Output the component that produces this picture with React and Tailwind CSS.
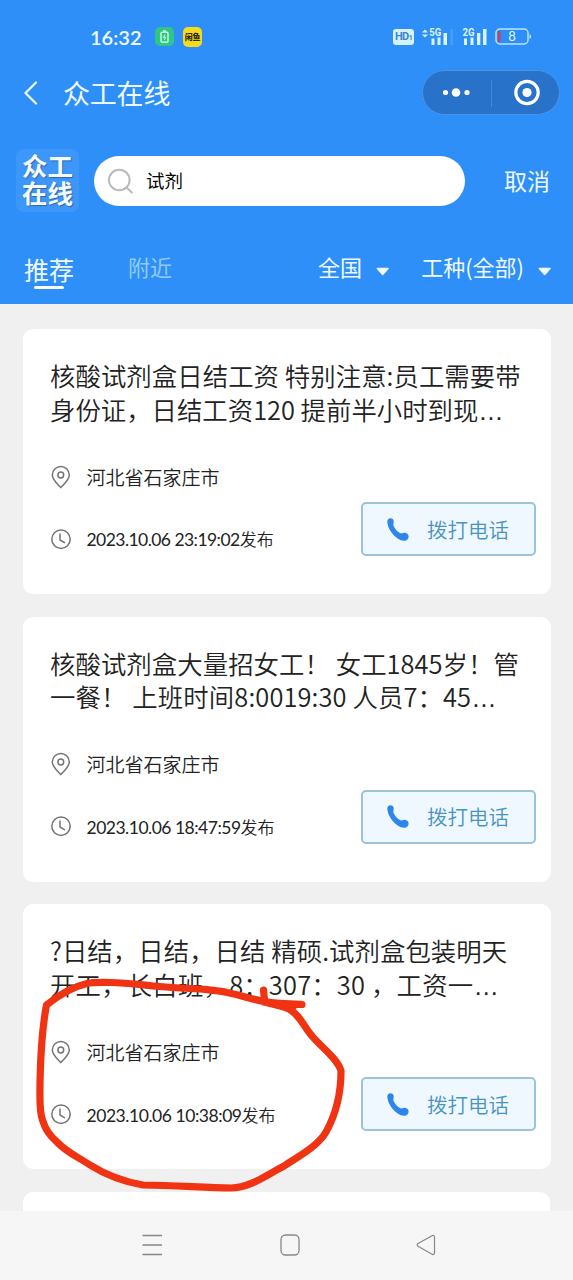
import React from 'react';

const jobs = [
    {
        id: 1,
        lines: [
            { text: '核酸试剂盒日结工资 特别注意:员工需要带', style: 'tracking-[0.06px]' },
            { text: '身份证，日结工资120 提前半小时到现', style: 'tracking-[0px]' },
        ],
        city: '河北省石家庄市',
        date: '2023.10.06 23:19:02',
        dateStyle: 'tracking-[-0.55px]',
    },
    {
        id: 2,
        lines: [
            { text: '核酸试剂盒大量招女工！ 女工1845岁！管', style: 'tracking-[0.06px]' },
            { text: '一餐！ 上班时间8:0019:30 人员7：45', style: 'tracking-[0.12px]' },
        ],
        city: '河北省石家庄市',
        date: '2023.10.06 18:47:59',
        dateStyle: 'tracking-[-0.5px]',
    },
    {
        id: 3,
        lines: [
            { text: '?日结，日结，日结 精硕.试剂盒包装明天', style: 'tracking-[0.06px]' },
            { text: '开工，长白班，8：307：30 ，工资一', style: 'tracking-[0.2px]' },
        ],
        city: '河北省石家庄市',
        date: '2023.10.06 10:38:09',
        dateStyle: 'tracking-[-0.45px]',
    },
];

const App = () => (
    <div className="relative flex h-[1280px] w-[573px] flex-col overflow-hidden bg-[#f0f0f0] font-['Noto_Sans_CJK_SC',sans-serif] font-[350] text-[#222]">
        <header className="h-[304px] shrink-0 bg-[#2f8ff9] text-[#eefaff]">
            <StatusBar />
            <NavBar />
            <SearchRow />
            <FilterRow />
        </header>

        <main className="flex min-h-0 flex-1 flex-col gap-[22.7px] overflow-hidden px-[23px] pt-[25px]">
            {jobs.map((job) => (
                <JobCard key={job.id} job={job} />
            ))}
            <div className="h-[265px] shrink-0 rounded-[10px] bg-white" />
        </main>

        <SystemNav />
        <Scribble />
    </div>
);

const StatusBar = () => (
    <div className="flex h-[69px] items-center pt-1 pr-[41px] pl-[90px]">
        <span className="w-[65px] font-['Lato','Noto_Sans_CJK_SC',sans-serif] text-[20px] leading-none font-semibold whitespace-nowrap">16:32</span>
        <div className="flex h-[19px] w-[19px] items-center justify-center rounded-[5px] bg-[#2fc783]">
            <svg width="9" height="13" viewBox="0 0 9 13" fill="none" stroke="#eafff4" strokeWidth="1.2">
                <rect x="1" y="2.2" width="7" height="10" rx="1" />
                <path d="M3 1h3" />
                <path d="M4.8 4.8 3.4 7.4h2.2L4.4 10" strokeWidth="0.9" />
            </svg>
        </div>
        <div className="ml-[9px] flex h-[20px] w-[19px] items-center justify-center rounded-[5px] bg-[#fadb1c]">
            <span className="text-[8px] leading-none font-black tracking-[-0.3px] text-[#2d2a12]">闲鱼</span>
        </div>
        <div className="ml-auto flex items-center">
            <div className="flex h-[16px] w-[21px] items-center justify-center rounded-[3px] bg-[#d6f2ff] font-['Roboto',sans-serif] text-[11px] leading-none font-bold tracking-[-0.6px] text-[#3b86c9]">
                HD<span className="pt-1 text-[7px]">1</span>
            </div>
            <svg className="ml-[8px]" width="33" height="19" viewBox="0 0 33 19" fill="#d9f4ff">
                <path d="M0 5.5 3 2.5l3 3zM0 7.5h6l-3 3z" />
                <text x="7.3" y="9" fontSize="11" fontWeight="700" fontFamily="Roboto" textLength="12" lengthAdjust="spacingAndGlyphs">5G</text>
                <rect x="9.5" y="11.5" width="3" height="6.5" />
                <rect x="15.5" y="10.5" width="3" height="7.5" />
                <rect x="21.5" y="6" width="3.5" height="12" />
                <rect x="28.5" y="2" width="2.5" height="16" opacity="0.15" />
            </svg>
            <svg className="ml-[7px]" width="26" height="19" viewBox="0 0 26 19" fill="#d9f4ff">
                <text x="0.5" y="9" fontSize="11" fontWeight="700" fontFamily="Roboto" textLength="12" lengthAdjust="spacingAndGlyphs">2G</text>
                <rect x="2" y="11.5" width="3" height="6.5" />
                <rect x="8.5" y="10.5" width="3" height="7.5" />
                <rect x="15" y="6" width="3.3" height="12" />
                <rect x="21" y="2" width="3.5" height="16" />
            </svg>
            <svg className="ml-[7px]" width="37" height="17" viewBox="0 0 37 17" fill="none">
                <rect x="1" y="1" width="32" height="15" rx="4" stroke="#b9e4ff" strokeWidth="1.5" />
                <path d="M5.5 3v11H4.5q-1.5 0-1.5-2V5q0-2 1.5-2z" fill="#d8366b" />
                <path d="M34.5 6v5q1.7-.5 1.7-2.5T34.5 6z" fill="#b9e4ff" />
                <text x="17" y="13" fontSize="13" fontFamily="Lato" fontWeight="400" textAnchor="middle" fill="#e4f7ff">8</text>
            </svg>
        </div>
    </div>
);

const NavBar = () => (
    <div className="flex h-[47px] items-center pr-[13px] pl-[23px]">
        <svg width="16" height="24" viewBox="0 0 16 24" fill="none" stroke="currentColor" strokeWidth="2.2" strokeLinecap="round" strokeLinejoin="round">
            <path d="M13 1.5 2.5 12 13 22.5" />
        </svg>
        <h1 className="ml-[24px] text-[27px] leading-none font-normal tracking-[-0.2px]">众工在线</h1>
        <div className="ml-auto flex h-[45px] w-[138px] items-center rounded-full border border-[#4b93e4] bg-[#2872c9]">
            <svg width="136" height="43" viewBox="0 0 136 43" fill="white">
                <circle cx="22.5" cy="21.5" r="2.6" />
                <circle cx="33" cy="21.5" r="4.3" />
                <circle cx="44" cy="21.5" r="2.6" />
                <path d="M68.5 9v27" stroke="#4686d3" />
                <circle cx="104" cy="21.5" r="11.2" fill="none" stroke="white" strokeWidth="3.2" />
                <circle cx="104" cy="21.5" r="4.6" />
            </svg>
        </div>
    </div>
);

const SearchRow = () => (
    <div className="mt-[33px] flex h-[63px] items-center pr-[23px] pl-[16px]">
        <div className="flex h-[63px] w-[63px] items-center justify-center rounded-lg bg-[#3d97fa]">
            <p className="font-['Liberation_Sans','Noto_Sans_CJK_SC',sans-serif] text-[25.5px] leading-[26.5px] font-bold text-[#f4fbff] [text-shadow:1px_1px_1px_#35659e]">众工<br />在线</p>
        </div>
        <div className="ml-[15px] flex h-[50px] w-[371px] items-center rounded-full bg-white pl-[14px]">
            <svg width="25" height="26" viewBox="0 0 25 26" fill="none" stroke="#b9bbb8" strokeWidth="2">
                <circle cx="11.3" cy="12" r="10.3" />
                <path d="m18.5 19.5 5.3 5" strokeLinecap="round" />
            </svg>
            <span className="ml-[13px] text-[18.5px] leading-none font-normal text-black">试剂</span>
        </div>
        <button className="ml-auto text-[23px] leading-none font-normal">取消</button>
    </div>
);

const FilterRow = () => (
    <div className="flex h-[91px] items-start pt-[43px] pr-[21px] pl-[24px] leading-none font-normal">
        <div className="flex flex-col items-center">
            <span className="text-[25px] leading-[28px]">推荐</span>
            <span className="mt-[3px] h-[3px] w-[30px] rounded-full bg-white" />
        </div>
        <span className="ml-[54px] text-[22px] leading-[23px] text-[#8fcbfc]">附近</span>
        <div className="ml-auto flex items-center">
            <span className="text-[22px] leading-[23px]">全国</span>
            <Caret />
        </div>
        <div className="ml-[31px] flex items-center">
            <span className="text-[22px] leading-[23px]">工种(全部)</span>
            <Caret />
        </div>
    </div>
);

const Caret = () => (
    <svg className="mt-[9px] ml-[14px]" width="14" height="9" viewBox="0 0 14 9" fill="#f2fcff">
        <path d="M1.2.7h11q1.1.2.4 1.2L7.7 7.6q-1 1-2 0L.8 1.9Q.1.9 1.2.7z" />
    </svg>
);

const JobCard = ({ job }) => (
    <article className="h-[265px] w-[528px] shrink-0 rounded-[10px] bg-white pt-[30px] pr-[15px] pl-[27px]">
        <h2 className="h-[67px] text-[25.4px] leading-[33.5px] font-[350] whitespace-pre">
            <span className={`block ${job.lines[0].style}`}>{job.lines[0].text}</span>
            <span className={`block ${job.lines[1].style}`}>
                {job.lines[1].text}
                <span className="font-['Liberation_Sans',sans-serif] leading-none tracking-normal">…</span>
            </span>
        </h2>
        <div className="mt-[38px] flex items-end justify-between">
            <div className="flex h-[92px] flex-col gap-[39px] pb-[5px]">
                <div className="flex h-6 items-center">
                    <PinIcon />
                    <span className="ml-[15.5px] text-[19px] leading-none">{job.city}</span>
                </div>
                <div className="flex h-6 items-center">
                    <ClockIcon />
                    <span className="ml-[15.5px] pt-px text-[17px] leading-none whitespace-pre">
                        <span className={`font-['Lato',sans-serif] text-[17.5px] font-normal ${job.dateStyle}`}>{job.date}</span>发布
                    </span>
                </div>
            </div>
            <button className="flex h-[54px] w-[175px] items-center rounded-[5px] border-2 border-[#9cc3dc] bg-[#eff8ff] pl-[23px] text-[#4a94c2]">
                <PhoneIcon />
                <span className="ml-[17px] text-[20.5px] leading-none">拨打电话</span>
            </button>
        </div>
    </article>
);

const PinIcon = () => (
    <svg className="mt-px" width="21" height="24" viewBox="0 0 21 24" fill="none" stroke="#747474" strokeWidth="1.5" strokeLinejoin="round">
        <path d="M10.8 22.6C6.7 18.3 2.3 14.6 2.3 10a8.5 8.5 0 0 1 17 0c0 4.6-4.4 8.3-8.5 12.6z" />
        <circle cx="10.8" cy="10" r="2.9" />
    </svg>
);

const ClockIcon = () => (
    <svg width="21" height="21" viewBox="0 0 21 21" fill="none" stroke="#747474" strokeWidth="1.5" strokeLinecap="round">
        <circle cx="11" cy="10.2" r="9.2" />
        <path d="M10 5v6l4.4 2.6" />
    </svg>
);

const PhoneIcon = () => (
    <svg width="24" height="25" viewBox="0 0 24 25" fill="#2f86ea">
        <path d="M1.3 4.5C1.3 2.2 3 1 4.8 1.2c2.2.2 3.2 2 2.9 4.4-.2 1.4-.8 2 0 3.6 1.5 3 3.5 5.2 6.3 6.9 1.2.7 1.9 0 3.3-.2 2.8-.4 5.2 1 5.3 3.3.1 2.5-2 4.5-4.6 4.5-3.8 0-8.3-3-11.7-7.2-3.2-4-5-8.3-5-12z" />
    </svg>
);

const SystemNav = () => (
    <nav className="flex h-[69px] shrink-0 items-center justify-between bg-[#f6f6f6] pr-[137px] pb-px pl-[142px]">
        <svg width="21" height="22" viewBox="0 0 21 22" stroke="#888" strokeWidth="1.5">
            <path d="M.5 1.5h19.5M.5 11h19.5M.5 20.5h19.5" />
        </svg>
        <svg width="20" height="22" viewBox="0 0 20 22" fill="none" stroke="#888" strokeWidth="1.3">
            <rect x="1" y="1" width="18" height="20" rx="4.5" />
        </svg>
        <svg width="20" height="22" viewBox="0 0 20 22" fill="none" stroke="#888" strokeWidth="1.2" strokeLinejoin="round">
            <path d="M16.5 1.5 2 9.5q-1.8 1.3 0 2.7l14.5 8.2q1.8.6 2-1.4V3q-.2-2-2-1.5z" />
        </svg>
    </nav>
);

// hand drawn marker ring over the last post
const Scribble = () => (
    <svg className="pointer-events-none absolute top-[970px] left-[25px]" width="330" height="230" viewBox="25 970 330 230" fill="none" stroke="#f03413" strokeWidth="7.2" strokeLinecap="round" strokeLinejoin="round">
        <path d="M302 1004.5C290 1004 277 1003.5 264 1001.5C250 999 240 995 227 992.5C218 990.5 209 990 200 989C184 988.5 168 987.5 153 986C139 984.5 124 982.5 110 982.5C102 982.5 94 982 87 983.5C72 987 60 994 46.5 1005C43 1023 40.5 1055 40 1083C40 1097 39 1111 42.5 1120C45 1129 50 1136 57 1142C66 1152 78 1157 90 1165C106 1175 125 1182 143 1185C176 1185 205 1188 231 1188C250 1188 268 1174 284 1166C299 1156 318 1146 326 1132C336 1114 341 1092 341 1071C338 1059 322 1048 312 1036C304 1027 300 1015 289 1009C282 1006 273 1004 264 1002" />
        <path d="M263.5 990l1 10" />
        <path d="M272 1003l20 7 7-6z" fill="#f03413" strokeWidth="3" />
    </svg>
);

export default App;
